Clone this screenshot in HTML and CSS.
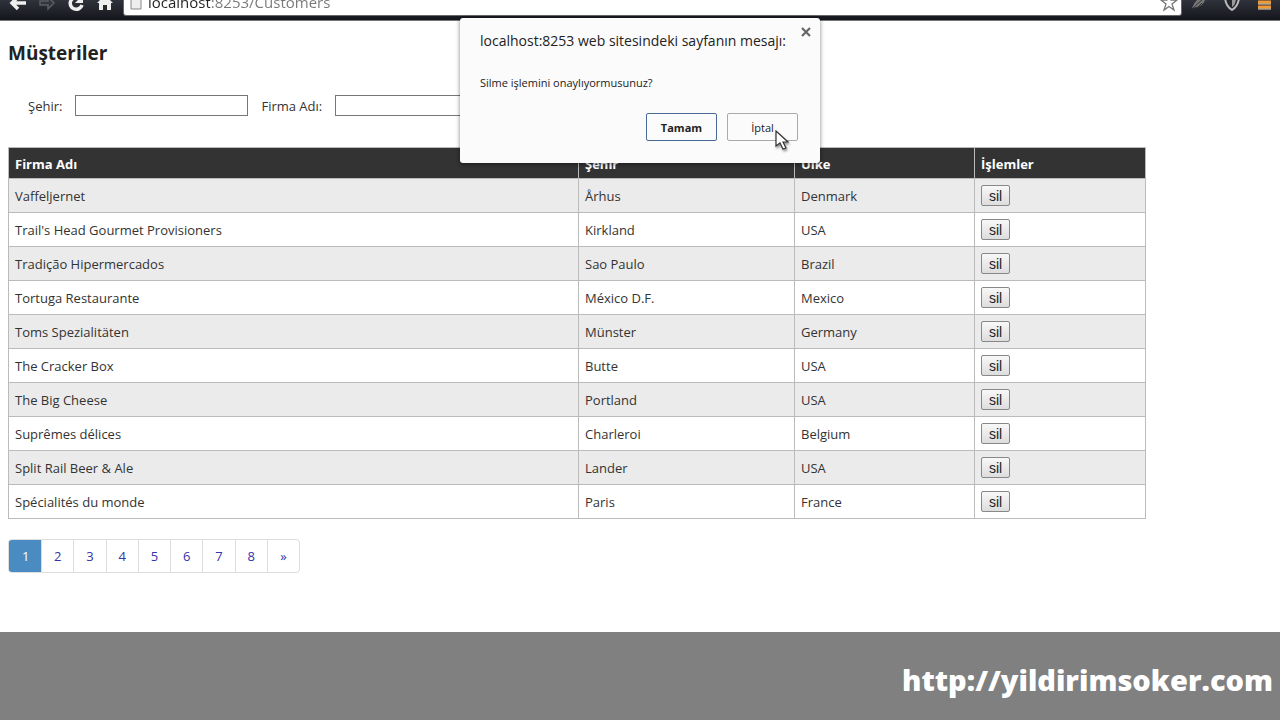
FILE: index.html
```html
<!DOCTYPE html>
<html lang="tr">
<head>
  <meta charset="UTF-8">
  <meta name="viewport" content="width=device-width, initial-scale=1.0">
  <title>Müşteriler</title>
  <link rel="stylesheet" href="styles.css">
</head>
<body>
  <header class="toolbar">
    <div class="toolbar-inner">
      <button class="tool" type="button" aria-label="Geri">
        <svg width="20" height="20" viewBox="0 0 20 20"><path d="M18 11H5M10 5l-6 6 6 6" fill="none" stroke="#eee" stroke-width="3.500"/></svg>
      </button>
      <button class="tool" type="button" aria-label="İleri">
        <svg width="20" height="20" viewBox="0 0 20 20"><path d="M3 9h8V5l6 6-6 6v-4H3z" fill="#34353d" stroke="#5b5c64" stroke-width="1.500"/></svg>
      </button>
      <button class="tool" type="button" aria-label="Yenile">
        <svg width="20" height="20" viewBox="0 0 20 20"><path d="M13 6a6 6 0 1 0 3 7" fill="none" stroke="#eee" stroke-width="3.500"/><path d="M17 3v8h-8z" fill="#eee"/></svg>
      </button>
      <button class="tool" type="button" aria-label="Ana sayfa">
        <svg width="20" height="20" viewBox="0 0 20 20"><path d="M10 3L2 11h2v7h4v-5h4v5h4v-7h2z" fill="#eee"/></svg>
      </button>
      <label class="omnibox">
        <svg width="12" height="16" viewBox="0 0 12 16"><path d="M1 1h10v14H1z" fill="#eee" stroke="#888"/></svg>
        <input type="text" class="url" value="localhost:8253/Customers" aria-label="Adres">
        <svg width="20" height="20" viewBox="0 0 20 20"><path d="M10 2l2 6h6l-5 4 2 6-5-3.500-5 3.500 2-6-5-4h6z" fill="#fff" stroke="#777" stroke-width="1.300"/></svg>
      </label>
      <button class="tool ext" type="button" aria-label="Tüy eklentisi">
        <svg width="20" height="20" viewBox="0 0 20 20"><path d="M2 16C5 9 9 5 16 2c0 8-4 12-9 13z" fill="#777"/><path d="M2 17L14 6M7 16l5-5" stroke="#333" stroke-width="1"/></svg>
      </button>
      <button class="tool ext" type="button" aria-label="Kalkan eklentisi">
        <svg width="20" height="20" viewBox="0 0 20 20"><path d="M10 2l7 2c0 7-2 11-7 14-5-3-7-7-7-14z" fill="#26272e" stroke="#bbb" stroke-width="2"/><path d="M10 4v11c3-2 4-5 4-10z" fill="#999"/></svg>
      </button>
      <button class="tool ext" type="button" aria-label="Menü">
        <svg width="20" height="20" viewBox="0 0 20 20"><path d="M4 5h13M4 10h13M4 15h13" stroke="#f09a35" stroke-width="3"/><path d="M4 12h13M4 17h13" stroke="#f6dfc0" stroke-width="1"/></svg>
      </button>
    </div>
  </header>

  <main class="content">
    <h1>Müşteriler</h1>

    <form class="filters">
      <label for="city">Şehir:</label>
      <input type="text" id="city">
      <label for="company">Firma Adı:</label>
      <input type="text" id="company">
    </form>

    <table class="customers">
      <thead>
        <tr><th class="col-company">Firma Adı</th><th class="col-city">Şehir</th><th class="col-country">Ülke</th><th>İşlemler</th></tr>
      </thead>
      <tbody>
        <tr><td>Vaffeljernet</td><td>Århus</td><td>Denmark</td><td><button type="button" class="delete">sil</button></td></tr>
        <tr><td>Trail's Head Gourmet Provisioners</td><td>Kirkland</td><td>USA</td><td><button type="button" class="delete">sil</button></td></tr>
        <tr><td>Tradição Hipermercados</td><td>Sao Paulo</td><td>Brazil</td><td><button type="button" class="delete">sil</button></td></tr>
        <tr><td>Tortuga Restaurante</td><td>México D.F.</td><td>Mexico</td><td><button type="button" class="delete">sil</button></td></tr>
        <tr><td>Toms Spezialitäten</td><td>Münster</td><td>Germany</td><td><button type="button" class="delete">sil</button></td></tr>
        <tr><td>The Cracker Box</td><td>Butte</td><td>USA</td><td><button type="button" class="delete">sil</button></td></tr>
        <tr><td>The Big Cheese</td><td>Portland</td><td>USA</td><td><button type="button" class="delete">sil</button></td></tr>
        <tr><td>Suprêmes délices</td><td>Charleroi</td><td>Belgium</td><td><button type="button" class="delete">sil</button></td></tr>
        <tr><td>Split Rail Beer &amp; Ale</td><td>Lander</td><td>USA</td><td><button type="button" class="delete">sil</button></td></tr>
        <tr><td>Spécialités du monde</td><td>Paris</td><td>France</td><td><button type="button" class="delete">sil</button></td></tr>
      </tbody>
    </table>

    <nav class="pagination">
      <a class="active" href="#1">1</a>
      <a href="#2">2</a>
      <a href="#3">3</a>
      <a href="#4">4</a>
      <a href="#5">5</a>
      <a href="#6">6</a>
      <a href="#7">7</a>
      <a href="#8">8</a>
      <a href="#next">»</a>
    </nav>
  </main>

  <footer class="footer"><a href="http://yildirimsoker.com">http://yildirimsoker.com</a></footer>

  <div class="dialog" role="dialog" aria-labelledby="dialog-title">
    <div class="dialog-head">
      <h2 id="dialog-title">localhost:8253 web sitesindeki sayfanın mesajı:</h2>
      <button type="button" class="close" aria-label="Kapat">
        <svg width="10" height="10" viewBox="0 0 10 10"><path d="M1 1l8 8M9 1L1 9" stroke="#666" stroke-width="2.200"/></svg>
      </button>
    </div>
    <p>Silme işlemini onaylıyormusunuz?</p>
    <div class="dialog-buttons">
      <button type="button" class="ok">Tamam</button>
      <button type="button" class="cancel">İptal</button>
    </div>
    <svg class="cursor" width="14" height="21" viewBox="0 0 14 21"><path d="M1 1v15l4-3 3 6 3-1-3-6h5z" fill="#fff" stroke="#333" stroke-width="1.200"/></svg>
  </div>
</body>
</html>
```
FILE: styles.css
```css
* {
  box-sizing: border-box;
}
body {
  margin: 0;
  min-height: 100vh;
  display: flex;
  flex-direction: column;
  font-family: "Open Sans", "Noto Sans", sans-serif;
  font-size: 13px;
  line-height: 20px;
  color: #333;
  background: #fff;
}
button, input {
  font-family: inherit;
}

/* browser bar, its upper part is scrolled out of view */
.toolbar {
  height: 21px;
  overflow: hidden;
  display: flex;
  align-items: flex-end;
  background: linear-gradient(#30323c, #15161c);
  border-bottom: 1px solid #777;
}
.toolbar-inner {
  flex: 1;
  display: flex;
  align-items: center;
  height: 32px;
  padding: 0 0 4px 3px;
}
.tool {
  width: 29px;
  height: 20px;
  padding: 0;
  border: none;
  background: none;
  text-align: center;
}
.tool.ext {
  width: 32px;
}
.omnibox {
  flex: 1;
  display: flex;
  align-items: center;
  height: 28px;
  padding: 0 2px 0 6px;
  margin: 0 2px 0 4px;
  background: #fff;
  border: 1px solid #666;
  border-radius: 3px;
}
.url {
  flex: 1;
  padding: 0 6px;
  border: none;
  font-size: 15px;
  line-height: 20px;
  color: transparent;
  background: linear-gradient(to right, #222 68px, #777 68px);
  background-clip: text;
  -webkit-background-clip: text;
}

.content {
  flex: 1;
  padding: 20px 8px;
}
h1 {
  margin: 0;
  font-size: 19px;
  line-height: 24px;
  color: #222;
}
.filters {
  display: flex;
  align-items: center;
  padding: 30px 20px 31px;
}
.filters input {
  width: 173px;
  height: 21px;
  margin: 0 13px;
  border: 1px solid #777;
  background: #fff;
}

.customers {
  width: 90%;
  table-layout: fixed;
  border-collapse: collapse;
}
.customers th,
.customers td {
  padding: 5px 6px;
  border: 1px solid #bbb;
  text-align: left;
}
.customers th {
  height: 31px;
  padding: 6px 6px 4px;
  background: #333;
  color: #fff;
}
.customers td {
  height: 34px;
}
.customers tbody tr:nth-child(odd) {
  background: #ebebeb;
}
.col-company {
  width: 570px;
}
.col-city {
  width: 216px;
}
.col-country {
  width: 180px;
}
.delete {
  display: block;
  width: 29px;
  height: 21px;
  padding: 0;
  border: 1px solid #888;
  border-radius: 2px;
  background: linear-gradient(#f8f8f8, #ddd);
  font-family: "Liberation Sans", Arial, sans-serif;
  font-size: 14px;
  color: #222;
}

.pagination {
  display: grid;
  grid-template-columns: repeat(9, 1fr);
  width: 292px;
  margin-top: 20px;
  border: 1px solid #ddd;
  border-radius: 4px;
  overflow: hidden;
}
.pagination a {
  padding-top: 1px;
  line-height: 31px;
  border-left: 1px solid #ddd;
  text-align: center;
  text-decoration: none;
  color: #33a;
}
.pagination .active {
  background: #4a8cc2;
  border-color: #4a8cc2;
  color: #fff;
}

.footer {
  height: 88px;
  padding: 28px 7px;
  background: #808080;
  text-align: right;
  font-size: 29px;
  line-height: 40px;
  font-weight: 800;
}
.footer a {
  color: #fff;
  text-decoration: none;
}

.dialog {
  position: absolute;
  top: 18px;
  left: 50%;
  width: 360px;
  margin-left: -180px;
  padding: 9px 9px 22px 20px;
  background: #fbfbfb;
  border-radius: 3px;
  box-shadow: 0 1px 4px rgba(0,0,0,0.5);
  color: #222;
}
.dialog-head {
  display: flex;
  justify-content: space-between;
  align-items: flex-start;
}
.dialog h2 {
  margin: 0;
  font-size: 14px;
  line-height: 28px;
  font-weight: normal;
}
.close {
  display: flex;
  padding: 0;
  border: none;
  background: none;
}
.dialog p {
  margin: 18px 0 20px;
  font-size: 11px;
}
.dialog-buttons {
  display: flex;
  justify-content: flex-end;
  gap: 10px;
  padding-right: 13px;
}
.dialog-buttons button {
  width: 71px;
  height: 28px;
  border: 1px solid #aaa;
  border-radius: 2px;
  background: #fbfbfb;
  font-size: 11px;
  color: #222;
}
.dialog-buttons .ok {
  border-color: #4a6a96;
  font-weight: bold;
}
.cursor {
  position: absolute;
  left: 315px;
  top: 112px;
  filter: drop-shadow(1px 2px 1px rgba(0,0,0,0.4));
}
```
